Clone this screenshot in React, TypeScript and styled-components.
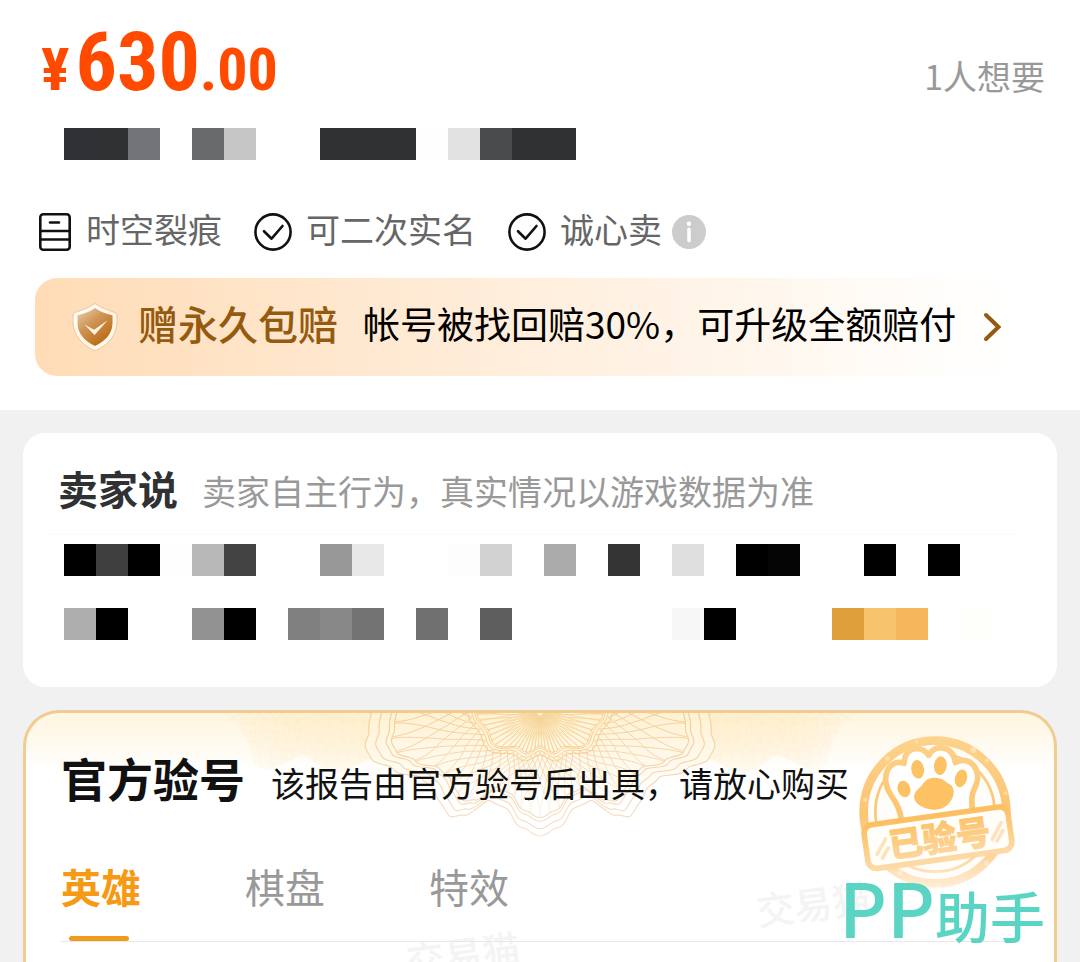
import React, { useState } from "react";
import styled, { createGlobalStyle } from "styled-components";

const GlobalStyle = createGlobalStyle`
  *, *::before, *::after { box-sizing: border-box; }
  body {
    margin: 0;
    background: #f1f1f1;
    font-family: "Noto Sans CJK SC", sans-serif;
    color: #111;
  }
  h2, p { margin: 0; }
`;

const Page = styled.main`
  position: relative;
  min-height: 100vh;
  display: flex;
  flex-direction: column;
  overflow: hidden;
`;

const Summary = styled.section`
  background: #fff;
  padding: 16px 35px 34px;
`;

const PriceRow = styled.div`
  display: flex;
  align-items: baseline;
  justify-content: space-between;
  height: 90px;
  margin-bottom: 22px;
  padding-left: 6px;
`;

const Price = styled.div`
  font-family: "Roboto Condensed", "Liberation Sans", sans-serif;
  font-weight: 700;
  font-size: 60px;
  line-height: 92px;
  color: #ff4a00;
  white-space: nowrap;
`;

const PriceWhole = styled.span`
  font-size: 82px;
  margin-left: 6px;
`;

const WantCount = styled.span`
  font-size: 34px;
  line-height: 48px;
  color: #999;
`;

const Mosaic = styled.div<{ $indent: number }>`
  display: flex;
  flex-direction: column;
  gap: 32px;
  padding-left: ${(p) => p.$indent}px;
`;

const MosaicRow = styled.div`
  display: flex;
  height: 32px;
`;

const MosaicCell = styled.span<{ $color: string }>`
  flex: none;
  width: 32px;
  background: ${(p) => p.$color};
`;

const Tags = styled.ul`
  list-style: none;
  display: flex;
  align-items: center;
  gap: 32px;
  margin: 50px 0 24px;
  padding: 0 0 0 3px;
  height: 44px;
`;

const Tag = styled.li`
  display: flex;
  align-items: center;
  gap: 14px;
  color: #666;
  font-size: 34px;
  line-height: 38px;

  svg { flex: none; display: block; }
`;

const TagLabel = styled.span`
  display: flex;
  align-items: center;
  gap: 10px;
`;

const TagText = styled.span`
  padding-bottom: 6px;
`;

const InfoButton = styled.button`
  border: 0;
  padding: 0;
  background: none;
  display: block;
`;

const Guarantee = styled.a`
  display: flex;
  align-items: center;
  height: 98px;
  padding: 0 14px 0 36px;
  border-radius: 22px;
  background: linear-gradient(90deg, #ffdcb6 0%, #ffe9d2 34%, #fff5ea 68%, #fffdfa 88%, #ffffff 98%);
  color: #000;
  text-decoration: none;
  white-space: nowrap;
  line-height: 56px;

  svg { flex: none; display: block; }
`;

const GuaranteeTitle = styled.strong`
  margin: 0 25px 0 19px;
  padding-bottom: 8px;
  font-size: 40px;
  font-weight: 500;
  color: #945a10;
`;

const GuaranteeText = styled.span`
  margin-right: 26px;
  padding-bottom: 8px;
  font-size: 37px;
`;

const SellerCard = styled.section`
  margin: 23px 23px 0;
  padding: 25px 0 47px;
  border-radius: 22px;
  background: #fff;
`;

const CardHead = styled.header<{ $gap: number; $inset: number }>`
  display: flex;
  align-items: baseline;
  gap: ${(p) => p.$gap}px;
  padding-left: ${(p) => p.$inset}px;
  white-space: nowrap;
`;

const SellerTitle = styled.h2`
  font-size: 40px;
  line-height: 60px;
  font-weight: 700;
  color: #2f3133;
`;

const Hint = styled.p<{ $color: string }>`
  font-size: 34px;
  line-height: 48px;
  color: ${(p) => p.$color};
`;

const SellerRule = styled.hr`
  height: 1px;
  margin: 16px 37px 9px 22px;
  border: 0;
  background: #fafafa;
`;

const ReportCard = styled.section`
  position: relative;
  flex: 1;
  margin: 23px 23px 0;
  padding-top: 32px;
  border: 3px solid #f1cc92;
  border-bottom: 0;
  border-radius: 36px 36px 0 0;
  background: linear-gradient(180deg, #fff6e0 0, #fffaf0 32px, #ffffff 58px);
  overflow: hidden;
`;

const ReportHead = styled(CardHead)`
  position: relative;
`;

const ReportTitle = styled.h2`
  font-size: 46px;
  line-height: 64px;
  font-weight: 700;
  color: #111;
`;

const TabBar = styled.div`
  position: relative;
  display: flex;
  gap: 104px;
  margin: 49px 34px 0 35px;
  border-bottom: 1px solid #e8e8e8;
`;

const Tab = styled.button<{ $active: boolean }>`
  position: relative;
  border: 0;
  padding: 0 0 27px;
  background: none;
  font-family: inherit;
  font-size: 40px;
  line-height: 56px;
  font-weight: ${(p) => (p.$active ? 700 : 400)};
  color: ${(p) => (p.$active ? "#f59a12" : "#999")};

  &::after {
    content: "";
    position: absolute;
    left: 8px;
    bottom: 0;
    width: 60px;
    height: 5px;
    border-radius: 3px;
    background: ${(p) => (p.$active ? "#ee9b1e" : "transparent")};
  }
`;

const Rosette = styled.svg`
  position: absolute;
  top: 0;
  left: 50%;
  margin-left: -320px;
`;

const Stamp = styled.svg`
  position: absolute;
  top: 19px;
  right: 35px;
`;

const Watermark = styled.span<{ $left: number; $top: number }>`
  position: absolute;
  left: ${(p) => p.$left}%;
  top: ${(p) => p.$top}px;
  font-size: 38px;
  line-height: 48px;
  font-weight: 500;
  color: #f4f4f4;
  transform: rotate(-7deg);
`;

const Brand = styled.div`
  position: absolute;
  right: 35px;
  bottom: 8px;
  display: flex;
  align-items: baseline;
  line-height: 80px;
  font-weight: 500;
  color: #5bd5c3;
  white-space: nowrap;
`;

const BrandLatin = styled.span`
  font-size: 74px;
`;

const BrandHan = styled.span`
  font-size: 55px;
`;

type Colors = (string | 0)[];

const titleMosaic: Colors[] = [
  ["#303135", "#2f3132", "#737477", 0, "#68696b", "#c6c6c6", 0, 0, "#2f3132", "#2f3132", "#2f3132", "#fefefe", "#e2e2e2", "#4a4b4c", "#2f3132", "#2f3132"],
];

const sellerMosaic: Colors[] = [
  ["#000", "#3f3f3f", "#000", "#fefefe", "#b8b8b8", "#434343", 0, 0, "#989898", "#e8e8e8", 0, 0, "#fdfdfd", "#d2d2d2", 0, "#ababab", 0, "#343434", 0, "#dedede", 0, "#000", "#050505", 0, 0, "#000", 0, "#000"],
  ["#aeaeae", "#000", 0, 0, "#929292", "#000", 0, "#808080", "#888888", "#737373", 0, "#707070", 0, "#5e5e5e", 0, 0, 0, 0, 0, "#f7f7f7", "#000", 0, 0, 0, "#df9f3a", "#f6c46a", "#f6b65b", 0, "#fffffa"],
];

function MosaicBlock({ rows, indent }: { rows: Colors[]; indent: number }) {
  return (
    <Mosaic $indent={indent} aria-hidden="true">
      {rows.map((row, r) => (
        <MosaicRow key={r}>
          {row.map((c, i) => (
            <MosaicCell key={i} $color={c || "transparent"} />
          ))}
        </MosaicRow>
      ))}
    </Mosaic>
  );
}

const ServerIcon = () => (
  <svg width="34" height="38" viewBox="0 0 34 38" fill="none" stroke="#111" strokeWidth="2.6" strokeLinecap="round">
    <rect x="2.3" y="1.3" width="29.4" height="35.4" rx="3" />
    <path d="M12 9.500h9M3 18h28M3 26.500h28" />
  </svg>
);

const CheckIcon = () => (
  <svg width="38" height="38" viewBox="0 0 38 38" fill="none" stroke="#111" strokeWidth="2.6" strokeLinecap="round" strokeLinejoin="round">
    <circle cx="19" cy="19" r="17.6" />
    <path d="M10 18.200l7.600 7.500L28.500 13" />
  </svg>
);

const InfoIcon = () => (
  <svg width="34" height="34" viewBox="0 0 34 34">
    <circle cx="17" cy="17" r="17" fill="#ccc" />
    <circle cx="17" cy="8.700" r="2.200" fill="#fff" />
    <rect x="15.200" y="12.600" width="3.600" height="14.800" rx="1.800" fill="#fff" />
  </svg>
);

const ShieldIcon = () => (
  <svg width="48" height="50" viewBox="0 0 48 50">
    <defs>
      <linearGradient id="shieldFill" x1="0" y1="0" x2="0.7" y2="1">
        <stop offset="0" stopColor="#ecd2b0" />
        <stop offset="0.45" stopColor="#cf9555" />
        <stop offset="1" stopColor="#b8690e" />
      </linearGradient>
      <linearGradient id="shieldRim" x1="0" y1="0" x2="1" y2="1">
        <stop offset="0" stopColor="#ffffff" />
        <stop offset="0.6" stopColor="#fff3e2" />
        <stop offset="1" stopColor="#ffffff" />
      </linearGradient>
    </defs>
    <path d="M24 1.500C30 6 37 8 44 10.500Q46 11.500 46 14v7C45 34 37 42.500 26 48Q24 49 22 48C11 42.500 3 34 2 21v-7Q2 11.500 4 10.500C11 8 18 6 24 1.500z" fill="url(#shieldRim)" stroke="#efc796" strokeWidth="1" />
    <path d="M24 6C29 9.500 35 12 41.500 13.300v7.700C41.500 31.500 34.500 39 24 44 13.500 39 6.500 31.500 6.500 21v-7.700C13 12 19 9.500 24 6z" fill="url(#shieldFill)" />
    <path d="M13.500 22.500l9.500 5.200 13.500-9.200L23.500 33z" fill="#fff4e4" />
  </svg>
);

const ChevronIcon = () => (
  <svg width="20" height="32" viewBox="0 0 20 32" fill="none" stroke="#945a10" strokeWidth="4" strokeLinecap="round" strokeLinejoin="miter">
    <path d="M4 4l12.500 12L4 28" />
  </svg>
);

// Outer outline of the ornament: [degrees from straight down, radius].
const outline: [number, number][] = [
  [0, 123], [9, 116], [20, 101], [30, 101], [37, 128], [41, 137], [48, 134], [55, 131], [61, 135], [69, 157], [75, 175], [79, 178], [84, 172], [95, 166],
];

function radiusAt(deg: number) {
  const a = Math.abs(deg);
  for (let i = 1; i < outline.length; i++) {
    const [a1, r1] = outline[i];
    const [a0, r0] = outline[i - 1];
    if (a <= a1) {
      const t = (1 - Math.cos((Math.PI * (a - a0)) / (a1 - a0))) / 2;
      return r0 + (r1 - r0) * t;
    }
  }
  return outline[outline.length - 1][1];
}

function polar(deg: number, r: number) {
  const rad = (deg * Math.PI) / 180;
  return `${(320 + Math.sin(rad) * r).toFixed(1)} ${(Math.cos(rad) * r).toFixed(1)}`;
}

function trace(points: string[]) {
  return "M" + points.join("L");
}

function ring(f: (deg: number) => number) {
  const pts: string[] = [];
  for (let d = -95; d <= 95; d += 1) pts.push(polar(d, f(d)));
  return trace(pts);
}

function spokes(count: number, twist: number, from: (d: number) => number, to: (d: number) => number) {
  let d = "";
  for (let k = -count; k <= count; k++) {
    const base = (k * 115) / count;
    for (const dir of [-1, 1]) {
      const pts: string[] = [];
      for (let s = 0; s <= 12; s++) {
        const t = s / 12;
        const a = base + dir * twist * (t - 0.5 * t * t) * 2;
        pts.push(polar(a, from(a) + (to(a) - from(a)) * t));
      }
      d += trace(pts);
    }
  }
  return d;
}

const core = (d: number) => {
  const side = Math.sin((d * Math.PI) / 180);
  return 36 + 24 * side * side - 3 * Math.cos((d * Math.PI) / 18);
};
const outerRings = [1, 0.94, 0.88, 0.85].map((k) => ring((d) => radiusAt(d) * k));
const innerRings = [0, 2, 5, 9].map((k) => ring((d) => core(d) + k));
const lattice = spokes(20, 17, (d) => core(d) + 6, (d) => radiusAt(d) * 0.85);
const coreLattice = spokes(20, 9, () => 3, core);

const wing = "M0 0C10 8 22 14 28 30c4 12 2 22 14 26 14 2 26-10 42-14 12 6 20 18 36 18 14-4 20-12 34-14V0z";

function wingMesh() {
  let d = "";
  for (let k = 0; k < 14; k++) {
    const x = 6 + k * 11;
    d += `M${x} 0q14 14 4 30t6 34M${x + 12} 0q-16 14 -4 30t-8 34`;
  }
  for (let k = 0; k < 6; k++) d += `M10 ${6 + k * 9}q18 -10 36 0t36 0 36 0 36 0`;
  return d;
}

const mesh = wingMesh();

const RosetteArt = () => (
  <Rosette width="640" height="130" viewBox="0 0 640 130" aria-hidden="true">
    <defs>
      <linearGradient id="wingFill" x1="0" y1="0" x2="1" y2="0">
        <stop offset="0" stopColor="#ffeecb" stopOpacity="0" />
        <stop offset="0.4" stopColor="#ffeecb" stopOpacity="0.8" />
        <stop offset="1" stopColor="#ffeecb" />
      </linearGradient>
      <linearGradient id="fadeDown" x1="0" y1="0" x2="0" y2="62" gradientUnits="userSpaceOnUse">
        <stop offset="0" stopColor="#fff" />
        <stop offset="1" stopColor="#fff" stopOpacity="0.25" />
      </linearGradient>
      <mask id="wingMask" maskUnits="userSpaceOnUse" x="0" y="0" width="160" height="70">
        <rect width="160" height="70" fill="url(#fadeDown)" />
      </mask>
      <linearGradient id="roseFill" x1="0" y1="0" x2="0" y2="80" gradientUnits="userSpaceOnUse">
        <stop offset="0" stopColor="#fff1d2" />
        <stop offset="1" stopColor="#ffffff" />
      </linearGradient>
      <linearGradient id="roseLine" x1="0" y1="0" x2="0" y2="126" gradientUnits="userSpaceOnUse">
        <stop offset="0" stopColor="#f3cd90" />
        <stop offset="0.45" stopColor="#f3d6ac" />
        <stop offset="1" stopColor="#f4dfcc" />
      </linearGradient>
      <linearGradient id="latticeLine" x1="0" y1="0" x2="0" y2="104" gradientUnits="userSpaceOnUse">
        <stop offset="0" stopColor="#f3cd94" />
        <stop offset="0.6" stopColor="#f6dcb6" />
        <stop offset="1" stopColor="#f9eada" stopOpacity="0.3" />
      </linearGradient>
      <clipPath id="wingClip">
        <path d={wing} />
      </clipPath>
      <g id="wing" mask="url(#wingMask)">
        <path d={wing} fill="url(#wingFill)" />
        <path d={mesh} clipPath="url(#wingClip)" fill="none" stroke="#f3dcb4" strokeWidth="0.5" strokeOpacity="0.4" />
      </g>
    </defs>
    <use href="#wing" />
    <use href="#wing" transform="matrix(-1 0 0 1 640 0)" />
    <path d={outerRings[0]} fill="url(#roseFill)" />
    <g fill="none">
      <path d={lattice} stroke="url(#latticeLine)" strokeWidth="1" />
      {outerRings.map((d, i) => (
        <path key={i} d={d} stroke="url(#roseLine)" strokeWidth="1.1" />
      ))}
      <path d={coreLattice} stroke="#f6d69c" strokeWidth="0.9" />
      {innerRings.map((d, i) => (
        <path key={i} d={d} stroke="#f5cb85" strokeWidth="1" />
      ))}
    </g>
  </Rosette>
);

const StampArt = () => (
  <Stamp width="160" height="160" viewBox="177 96 480 480" role="img" aria-label="已验号">
    <defs>
      <linearGradient id="stampInk" x1="0" y1="100" x2="0" y2="570" gradientUnits="userSpaceOnUse">
        <stop offset="0" stopColor="#fdd38c" />
        <stop offset="0.5" stopColor="#fcc572" />
        <stop offset="0.75" stopColor="#fdd091" />
        <stop offset="1" stopColor="#fff0dc" />
      </linearGradient>
      <linearGradient id="bannerInk" x1="0" y1="-65" x2="0" y2="65" gradientUnits="userSpaceOnUse">
        <stop offset="0" stopColor="#fcc063" />
        <stop offset="1" stopColor="#fdd9a4" />
      </linearGradient>
    </defs>
    <circle cx="405" cy="336" r="214" fill="#fffdf9" stroke="url(#stampInk)" strokeWidth="26" />
    <circle cx="405" cy="336" r="179" fill="none" stroke="url(#stampInk)" strokeWidth="8" />
    <path
      d="M304 362C302 330 288 306 272 284C258 264 252 236 262 212C272 190 292 182 312 190C314 160 330 146 350 146C366 146 378 154 386 166C396 148 410 142 426 144C448 146 462 160 466 188C486 176 508 180 522 198C538 220 534 246 524 264C514 284 514 300 518 336"
      fill="#fff"
      stroke="url(#stampInk)"
      strokeWidth="17"
      strokeLinejoin="round"
    />
    <g fill="#fcc263">
      <ellipse cx="312" cy="267" rx="19" ry="25" transform="rotate(-18 312 267)" />
      <ellipse cx="353" cy="208" rx="19" ry="28" transform="rotate(-8 353 208)" />
      <ellipse cx="421" cy="197" rx="19" ry="28" transform="rotate(6 421 197)" />
      <ellipse cx="483" cy="235" rx="18" ry="27" transform="rotate(16 483 235)" />
      <path d="M342 292C342 272 362 264 370 250C380 236 396 232 410 234C428 234 436 246 448 252C464 262 464 280 456 296C444 320 424 328 404 329C380 330 344 316 342 292z" />
    </g>
    <g transform="translate(414 413) rotate(-8)">
      <rect x="-218" y="-66" width="436" height="132" rx="26" fill="#fffefb" stroke="url(#bannerInk)" strokeWidth="17" />
      <path d="M-188 24l32-42M-174 38l22-28M160 28l34-46M174 34l22-28" stroke="#fde3bb" strokeWidth="11" strokeLinecap="round" />
      <text
        x="4"
        y="40"
        textAnchor="middle"
        fontSize="102"
        fontWeight="900"
        fontFamily="Noto Sans CJK SC, sans-serif"
        fill="url(#bannerInk)"
        stroke="url(#bannerInk)"
        strokeWidth="3"
      >
        已验号
      </text>
    </g>
    <g fill="#fff" fillOpacity="0.35">
      <circle cx="262" cy="176" r="7" />
      <circle cx="520" cy="150" r="9" />
      <circle cx="560" cy="182" r="6" />
      <circle cx="196" cy="300" r="7" />
      <circle cx="616" cy="280" r="6" />
      <circle cx="350" cy="126" r="5" />
      <circle cx="560" cy="490" r="8" />
      <circle cx="300" cy="520" r="7" />
    </g>
  </Stamp>
);

const tabs = ["英雄", "棋盘", "特效"];

export default function App() {
  const [active, setActive] = useState(0);

  return (
    <Page>
      <GlobalStyle />
      <Summary>
        <PriceRow>
          <Price>
            ¥<PriceWhole>630</PriceWhole>.00
          </Price>
          <WantCount>1人想要</WantCount>
        </PriceRow>
        <MosaicBlock rows={titleMosaic} indent={29} />
        <Tags>
          <Tag>
            <ServerIcon />
            <TagText>时空裂痕</TagText>
          </Tag>
          <Tag>
            <CheckIcon />
            <TagText>可二次实名</TagText>
          </Tag>
          <Tag>
            <CheckIcon />
            <TagLabel>
              <TagText>诚心卖</TagText>
              <InfoButton type="button" aria-label="诚心卖">
                <InfoIcon />
              </InfoButton>
            </TagLabel>
          </Tag>
        </Tags>
        <Guarantee href="#guarantee">
          <ShieldIcon />
          <GuaranteeTitle>赠永久包赔</GuaranteeTitle>
          <GuaranteeText>帐号被找回赔30%，可升级全额赔付</GuaranteeText>
          <ChevronIcon />
        </Guarantee>
      </Summary>

      <SellerCard>
        <CardHead $gap={24} $inset={35}>
          <SellerTitle>卖家说</SellerTitle>
          <Hint $color="#999">卖家自主行为，真实情况以游戏数据为准</Hint>
        </CardHead>
        <SellerRule />
        <MosaicBlock rows={sellerMosaic} indent={41} />
      </SellerCard>

      <ReportCard>
        <RosetteArt />
        <Watermark $left={71} $top={166} aria-hidden="true">交易猫</Watermark>
        <Watermark $left={37} $top={216} aria-hidden="true">交易猫</Watermark>
        <StampArt />
        <ReportHead $gap={26} $inset={35}>
          <ReportTitle>官方验号</ReportTitle>
          <Hint $color="#111">该报告由官方验号后出具，请放心购买</Hint>
        </ReportHead>
        <TabBar role="tablist">
          {tabs.map((name, i) => (
            <Tab key={name} type="button" role="tab" aria-selected={i === active} $active={i === active} onClick={() => setActive(i)}>
              {name}
            </Tab>
          ))}
        </TabBar>
      </ReportCard>

      <Brand>
        <BrandLatin>PP</BrandLatin>
        <BrandHan>助手</BrandHan>
      </Brand>
    </Page>
  );
}
